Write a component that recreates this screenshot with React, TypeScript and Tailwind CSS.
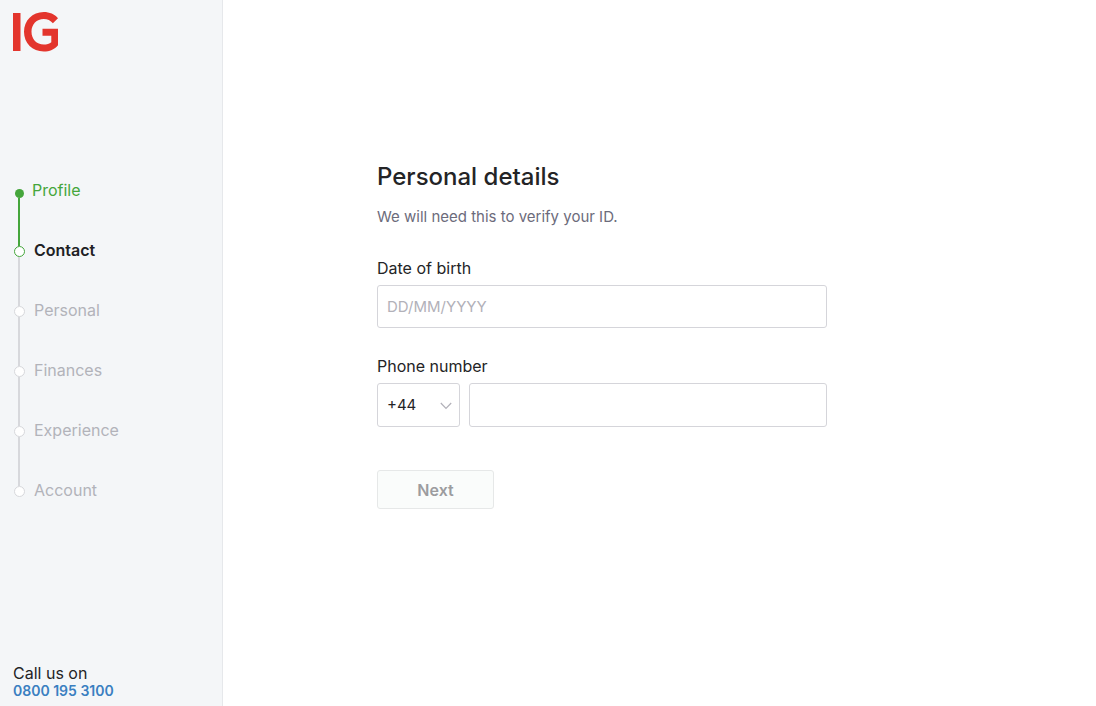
import { useState } from "react";
import { clsx } from "clsx";

type StepState = "done" | "current" | "todo";

const steps: { label: string; state: StepState }[] = [
  { label: "Profile", state: "done" },
  { label: "Contact", state: "current" },
  { label: "Personal", state: "todo" },
  { label: "Finances", state: "todo" },
  { label: "Experience", state: "todo" },
  { label: "Account", state: "todo" },
];

function Logo() {
  return (
    <svg viewBox="0 0 46 40" className="h-10 w-[46px]" role="img" aria-label="IG">
      <rect x="0" y="1" width="7.5" height="38" fill="#e3352d" />
      <path
        d="M45 16.800V33.200C41.600 37.300 36.500 39.500 30.800 39.500C19.400 39.500 11 31.200 11 19.800C11 8.500 19.400 0 30.800 0C36.500 0 41.600 2.200 45 6.300L39.900 11.300C37.500 8.400 34.500 7 30.800 7C23.600 7 18.500 12.400 18.500 19.800C18.500 27.200 23.600 32.500 30.800 32.500C33.800 32.500 36.500 31.700 38.300 30.200V23.700H29.500V16.800Z"
        fill="#e3352d"
      />
    </svg>
  );
}

function Stepper() {
  return (
    <ol className="pl-3.5">
      {steps.map(({ label, state }, i) => (
        <li
          key={label}
          className="flex h-[60px]"
          aria-current={state === "current" ? "step" : undefined}
        >
          {/* Line in, dot, line out */}
          <div className="flex w-[11px] flex-col">
            <span
              className={clsx(
                "ml-1 w-0.5",
                i === 0 ? "h-[9px]" : "h-[6px]",
                i === 1 && "bg-[#45a63c]",
                i > 1 && "bg-[#d7d8dc]"
              )}
            />
            <span
              className={clsx(
                "shrink-0 rounded-full",
                state === "done" && "mx-px size-[9px] bg-[#45a63c]",
                state === "current" && "size-[11px] border border-[#45a63c] bg-white",
                state === "todo" && "size-[11px] border border-[#d7d8dc] bg-white"
              )}
            />
            {i < steps.length - 1 && (
              <span
                className={clsx(
                  "ml-1 w-0.5 flex-1",
                  state === "done" ? "bg-[#45a63c]" : "bg-[#d7d8dc]"
                )}
              />
            )}
          </div>
          <span
            className={clsx(
              "leading-5",
              state === "done" && "pl-[7px] text-[#45a63c]",
              state === "current" && "pl-[9px] font-semibold text-[#202124]",
              state === "todo" && "pl-[9px] text-[#b2b3ba]"
            )}
          >
            {label}
          </span>
        </li>
      ))}
    </ol>
  );
}

const field =
  "rounded-[3px] border border-[#d5d5da] bg-white text-[15px] outline-none focus:border-[#8e8e99]";

export default function App() {
  const [dob, setDob] = useState("");
  const [code, setCode] = useState("+44");
  const [phone, setPhone] = useState("");

  return (
    <div className="flex min-h-screen bg-white font-['Inter',sans-serif] text-base text-[#242426]">
      <aside className="flex w-[223px] shrink-0 flex-col border-r border-[#e6e8eb] bg-[#f4f6f8]">
        <div className="pt-3 pl-[13px]">
          <Logo />
        </div>
        <nav className="pt-32" aria-label="Progress">
          <Stepper />
        </nav>
        <div className="mt-auto pb-1.5 pl-[13px]">
          <p className="leading-[18px]">Call us on</p>
          <a href="tel:08001953100" className="block text-sm leading-[18px] font-semibold text-[#3a7fc1]">
            0800 195 3100
          </a>
        </div>
      </aside>

      <main className="flex-1 pt-[161px] pr-6 pl-[154px]">
        <form className="max-w-[450px]" onSubmit={(e) => e.preventDefault()}>
          <h1 className="text-2xl leading-8 font-medium">Personal details</h1>
          <p className="mt-3 text-[15px] leading-6 text-[#6c6b7b]">
            We will need this to verify your ID.
          </p>

          <label htmlFor="dob" className="mt-[27px] block leading-6">
            Date of birth
          </label>
          <input
            id="dob"
            type="text"
            value={dob}
            onChange={(e) => setDob(e.target.value)}
            placeholder="DD/MM/YYYY"
            className={clsx(field, "mt-[5px] block h-[43px] w-full px-[9px] placeholder:text-[#b2b1b9]")}
          />

          <label htmlFor="phone" className="mt-[26px] block leading-6">
            Phone number
          </label>
          <div className="mt-[5px] flex gap-[9px]">
            <div className="relative">
              <select
                aria-label="Country code"
                value={code}
                onChange={(e) => setCode(e.target.value)}
                className={clsx(field, "h-11 w-[83px] appearance-none pr-7 pl-[9px]")}
              >
                <option>+44</option>
                <option>+353</option>
              </select>
              <svg
                viewBox="0 0 12 8"
                className="pointer-events-none absolute top-[19px] right-2 h-2 w-3"
                fill="none"
                stroke="#b2b1b9"
                strokeWidth="1.2"
              >
                <path d="M0.800 1L6 6.500L11.200 1" />
              </svg>
            </div>
            <input
              id="phone"
              type="tel"
              value={phone}
              onChange={(e) => setPhone(e.target.value)}
              className={clsx(field, "h-11 min-w-0 flex-1 px-[9px]")}
            />
          </div>

          <button
            type="submit"
            disabled={!dob || !phone}
            className="mt-[43px] h-[39px] w-[117px] rounded-[3px] border border-[#e6e8e8] bg-[#fafcfb] font-semibold text-[#9c9c9f]"
          >
            Next
          </button>
        </form>
      </main>
    </div>
  );
}
